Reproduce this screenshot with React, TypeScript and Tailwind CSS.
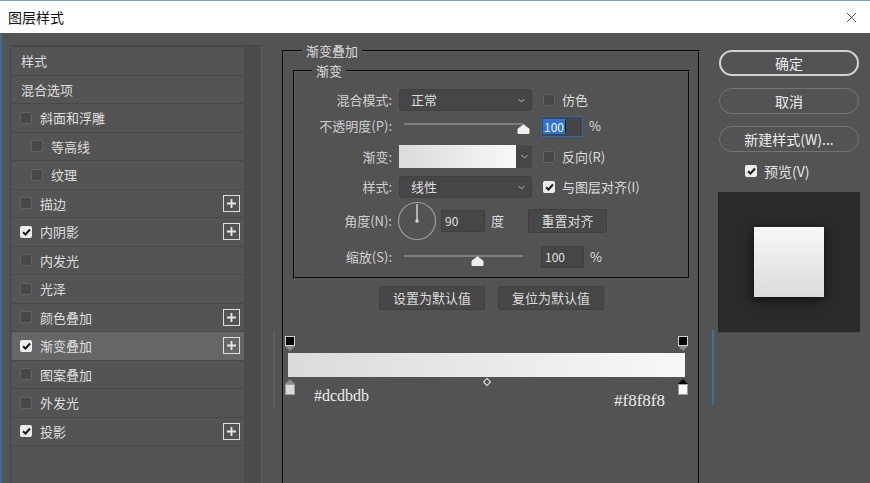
import { X } from "lucide-react";

type Row = {
  label: string;
  header?: boolean;
  on?: boolean;
  indent?: boolean;
  plus?: boolean;
  active?: boolean;
};

const rows: Row[] = [
  { label: "样式", header: true },
  { label: "混合选项", header: true },
  { label: "斜面和浮雕" },
  { label: "等高线", indent: true },
  { label: "纹理", indent: true },
  { label: "描边", plus: true },
  { label: "内阴影", on: true, plus: true },
  { label: "内发光" },
  { label: "光泽" },
  { label: "颜色叠加", plus: true },
  { label: "渐变叠加", on: true, plus: true, active: true },
  { label: "图案叠加" },
  { label: "外发光" },
  { label: "投影", on: true, plus: true },
];

function Check({ on }: { on?: boolean }) {
  if (on) {
    return (
      <span className="flex h-[12px] w-[12px] shrink-0 items-center justify-center rounded-[2px] bg-[#ececec]">
        <svg width="9" height="8" viewBox="0 0 9 8">
          <path d="M1 4.2 3.5 6.5 8 1.5" fill="none" stroke="#1c1c1c" strokeWidth="2" />
        </svg>
      </span>
    );
  }
  return <span className="block h-[12px] w-[12px] shrink-0 rounded-[2px] border border-[#636363] bg-[#474747]" />;
}

function Plus() {
  return (
    <span className="flex h-[17px] w-[17px] items-center justify-center border-[1.5px] border-[#dedede]">
      <svg width="9" height="9" viewBox="0 0 9 9">
        <path d="M4.5 0v9M0 4.5h9" stroke="#e6e6e6" strokeWidth="1.8" />
      </svg>
    </span>
  );
}

function Chevron() {
  return (
    <svg width="7" height="5" viewBox="0 0 7 5">
      <path d="M0.5 1 3.5 4 6.5 1" fill="none" stroke="#b5b5b5" strokeWidth="1" />
    </svg>
  );
}

function Slider({ pct }: { pct: number }) {
  return (
    <div className="relative h-[12px] w-[119px]">
      <div className="absolute left-0 right-0 top-0 h-[2px] bg-[#7f7f7f]" />
      <svg
        className="absolute top-[1px]"
        style={{ left: `calc(${pct}% - 6px)` }}
        width="13"
        height="10"
        viewBox="0 0 13 10"
      >
        <path d="M6.5 0.8 L12 5 V9.5 H1 V5 Z" fill="#f0f0f0" stroke="#f0f0f0" strokeLinejoin="round" />
      </svg>
    </div>
  );
}

function Label({ children }: { children: React.ReactNode }) {
  return <span className="w-[97px] shrink-0 text-right text-[13px] text-[#cfcfcf]">{children}</span>;
}

function Select({ value }: { value: string }) {
  return (
    <div className="ml-[7px] flex h-[22px] w-[133px] items-center justify-between rounded-[3px] border border-[#404040] bg-[#464646] pl-[11px] pr-[6px] text-[13px] text-[#dedede]">
      <span>{value}</span>
      <Chevron />
    </div>
  );
}

function SmallButton({ children, w }: { children: React.ReactNode; w: string }) {
  return (
    <div
      className={`flex h-[24px] ${w} items-center justify-center rounded-[2px] border border-[#3f3f3f] bg-[#474747] text-[13px] text-[#dcdcdc]`}
    >
      {children}
    </div>
  );
}

export default function App() {
  return (
    <div className="relative h-[483px] w-[870px] overflow-hidden bg-[#535353] font-['Noto_Sans_CJK_SC',sans-serif]">
      {/* title bar */}
      <div className="flex h-[33px] items-center justify-between border-t border-[#7d9cbc] bg-white pl-[8px] pr-[10px]">
        <span className="text-[14px] text-[#111]">图层样式</span>
        <X size={17} strokeWidth={1.1} color="#222" />
      </div>

      <div className="flex h-[450px] border-l-2 border-[#41698f]">
        {/* left list */}
        <div className="ml-[8px] mt-[12px] flex h-[440px] w-[253px] border-l border-t border-[#474747] pl-[1px]">
          <div className="w-[232px] border-t border-[#474747]">
            {rows.map((r) => (
              <div
                key={r.label}
                className={`flex h-[28.5px] items-center border-b border-[#484848] pr-[4px] text-[13px] text-[#dedede] ${
                  r.active ? "bg-[#666666]" : "bg-[#545454]"
                } ${r.header ? "pl-[9px]" : r.indent ? "pl-[19px]" : "pl-[8px]"}`}
              >
                {!r.header && <Check on={r.on} />}
                <span className={r.header ? "" : "ml-[8px]"}>{r.label}</span>
                {r.plus && (
                  <span className="ml-auto">
                    <Plus />
                  </span>
                )}
              </div>
            ))}
          </div>
          <div className="w-[18px] border-r border-[#626262] bg-[#4b4b4b]" />
        </div>

        {/* middle */}
        <fieldset className="ml-[19px] mt-[10px] h-[470px] w-[418px] border-2 border-[#5c5c5c] pl-[9px] [border-style:groove]">
          <legend className="ml-[9px] px-[4px] text-[13px] leading-[16px] text-[#dcdcdc]">渐变叠加</legend>

          <fieldset className="mt-[4px] w-[397px] border-2 border-[#5c5c5c] [border-style:groove]">
            <legend className="ml-[17px] px-[4px] text-[13px] leading-[16px] text-[#dcdcdc]">渐变</legend>

            <div className="pt-[10px]">
              <div className="flex h-[22px] items-center">
                <Label>混合模式:</Label>
                <Select value="正常" />
                <span className="ml-[11px] flex">
                  <Check />
                </span>
                <span className="ml-[7px] text-[13px] text-[#dcdcdc]">仿色</span>
              </div>

              <div className="mt-[4px] flex h-[22px] items-center">
                <Label>不透明度(P):</Label>
                <div className="ml-[12px] mt-[5px]">
                  <Slider pct={100} />
                </div>
                <div className="ml-[18px] flex h-[21px] w-[42px] items-center border border-[#2f66ad] bg-[#454545] pl-[1px]">
                  <span className="bg-[#2f74d0] px-[1px] text-[12px] leading-[15px] text-[#f4f4f4]">100</span>
                  <span className="h-[13px] w-[1px] bg-[#111]" />
                </div>
                <span className="ml-[6px] text-[13px] text-[#dcdcdc]">%</span>
              </div>

              <div className="mt-[8px] flex h-[23px] items-center">
                <Label>渐变:</Label>
                <div className="ml-[7px] flex h-[23px]">
                  <div className="w-[117px] bg-gradient-to-r from-[#dcdbdb] to-[#f8f8f8]" />
                  <div className="flex w-[16px] items-center justify-center bg-[#464646]">
                    <Chevron />
                  </div>
                </div>
                <span className="ml-[11px] flex">
                  <Check />
                </span>
                <span className="ml-[7px] text-[13px] text-[#dcdcdc]">反向(R)</span>
              </div>

              <div className="mt-[8px] flex h-[22px] items-center">
                <Label>样式:</Label>
                <Select value="线性" />
                <span className="ml-[11px] flex">
                  <Check on />
                </span>
                <span className="ml-[7px] text-[13px] text-[#dcdcdc]">与图层对齐(I)</span>
              </div>

              <div className="mt-[3px] flex h-[40px] items-center">
                <Label>角度(N):</Label>
                <svg className="ml-[5px]" width="40" height="40" viewBox="0 0 40 40">
                  <circle cx="20" cy="20" r="18.5" fill="none" stroke="#9c9c9c" strokeWidth="1.2" />
                  <path d="M20 3v17" stroke="#d8d8d8" strokeWidth="1.4" />
                  <circle cx="20" cy="20" r="1.8" fill="#d8d8d8" />
                </svg>
                <div className="ml-[4px] flex h-[22px] w-[44px] items-center border border-[#3f3f3f] bg-[#464646] pl-[3px] text-[12px] text-[#e0e0e0]">
                  90
                </div>
                <span className="ml-[6px] text-[13px] text-[#dcdcdc]">度</span>
                <div className="ml-[24px]">
                  <SmallButton w="w-[79px]">重置对齐</SmallButton>
                </div>
              </div>

              <div className="mb-[9px] mt-[5px] flex h-[22px] items-center">
                <Label>缩放(S):</Label>
                <div className="ml-[12px] mt-[8px]">
                  <Slider pct={61} />
                </div>
                <div className="ml-[18px] flex h-[22px] w-[43px] items-center border border-[#3f3f3f] bg-[#464646] pl-[3px] text-[12px] text-[#e0e0e0]">
                  100
                </div>
                <span className="ml-[6px] text-[13px] text-[#dcdcdc]">%</span>
              </div>
            </div>
          </fieldset>

          <div className="mt-[7px] flex w-[397px] justify-center gap-[13px]">
            <SmallButton w="w-[106px]">设置为默认值</SmallButton>
            <SmallButton w="w-[106px]">复位为默认值</SmallButton>
          </div>

          {/* gradient editor */}
          <div className="relative -ml-[9px] mt-[23px] h-[80px] w-[406px] pt-[20px]">
            <div className="ml-[4px] h-[24px] w-[397px] bg-gradient-to-r from-[#dcdbdb] to-[#f8f8f8]" />
            {/* top opacity stops */}
            {["left-[1px]", "left-[394px]"].map((p) => (
              <div key={p} className={`absolute top-[3px] ${p} flex flex-col items-center`}>
                <span className="h-[10px] w-[10px] border border-[#cfcfcf] bg-black" />
                <svg width="10" height="5" viewBox="0 0 10 5">
                  <path d="M0 0h10L5 5z" fill="#8a8a8a" />
                </svg>
              </div>
            ))}
            {/* bottom color stops */}
            <div className="absolute left-[1px] top-[46px] flex flex-col items-center">
              <svg width="10" height="5" viewBox="0 0 10 5">
                <path d="M0 5h10L5 0z" fill="#8a8a8a" />
              </svg>
              <span className="h-[11px] w-[10px] border border-[#9c9c9c] bg-[#dcdbdb]" />
            </div>
            <div className="absolute left-[394px] top-[46px] flex flex-col items-center">
              <svg width="10" height="5" viewBox="0 0 10 5">
                <path d="M0 5h10L5 0z" fill="#000" />
              </svg>
              <span className="h-[11px] w-[10px] border border-[#9c9c9c] bg-white" />
            </div>
            <span className="absolute left-[200px] top-[46px] h-[6px] w-[6px] rotate-45 border border-[#e6e6e6]" />
            <span className="absolute left-[30px] top-[54px] font-['Liberation_Serif',serif] text-[16px] leading-[18px] text-[#ececec]">
              #dcdbdb
            </span>
            <span className="absolute left-[330px] top-[59px] font-['Liberation_Serif',serif] text-[17px] leading-[18px] text-[#ececec]">
              #f8f8f8
            </span>
          </div>
        </fieldset>

        {/* right column */}
        <div className="ml-[18px] mt-[17px] w-[142px]">
          <div className="ml-[1px] flex h-[26px] w-[140px] items-center justify-center rounded-full border-2 border-[#d2d2d2] text-[14px] text-[#ececec]">
            确定
          </div>
          <div className="ml-[1px] mt-[12px] flex h-[26px] w-[140px] items-center justify-center rounded-full border border-[#747474] text-[14px] text-[#ececec]">
            取消
          </div>
          <div className="ml-[1px] mt-[12px] flex h-[26px] w-[140px] items-center justify-center rounded-full border border-[#747474] text-[14px] text-[#ececec]">
            新建样式(W)...
          </div>
          <div className="mt-[12px] flex h-[14px] items-center pl-[27px]">
            <Check on />
            <span className="ml-[7px] text-[14px] text-[#e2e2e2]">预览(V)</span>
          </div>
          <div className="mt-[14px] h-[141px] w-[142px] border-b border-[#4a4a4a] bg-[#2a2a2a] pl-[36px] pt-[35px]">
            <div className="h-[70px] w-[70px] bg-gradient-to-b from-[#f8f8f8] to-[#dcdbdb] shadow-[0_3px_10px_rgba(0,0,0,0.7)]" />
          </div>
        </div>
      </div>

      {/* editor frame marks */}
      <span className="absolute left-[273px] top-[330px] h-[77px] w-[2px] bg-[#5e5e5e]" />
      <span className="absolute left-[712px] top-[330px] h-[75px] w-[2px] bg-[#3f6e9c]" />
    </div>
  );
}
